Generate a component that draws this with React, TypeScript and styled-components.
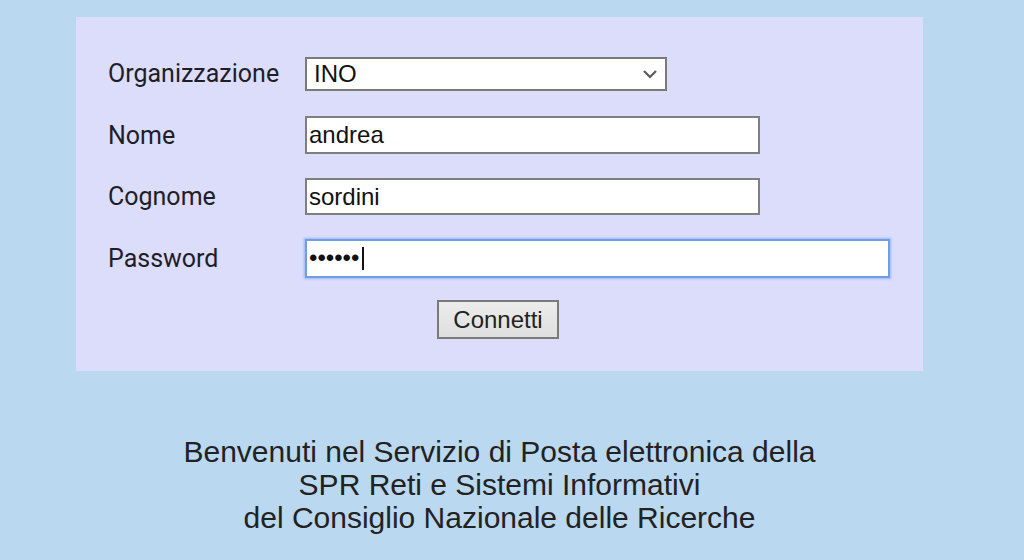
import React from "react";
import styled, { createGlobalStyle } from "styled-components";

const GlobalStyle = createGlobalStyle`
  html, body {
    margin: 0;
    padding: 0;
    background: #bad8ef;
  }
  * { box-sizing: border-box; }
`;

const Page = styled.div`
  width: 1024px;
  height: 560px;
  padding: 17px 101px 0 76px;
  background: #bad8ef;
  overflow: hidden;
`;

const Panel = styled.form`
  height: 354px;
  background: #dcdcfb;
  padding: 26px 32px 20px;
  display: grid;
  grid-template-columns: 197px 1fr;
  grid-auto-rows: 61.5px;
  align-items: center;
  margin: 0;
`;

const Label = styled.label`
  font-family: Roboto, "Liberation Sans", sans-serif;
  font-size: 25px;
  color: #1e1e28;
  line-height: 1;
`;

const SelectBox = styled.div`
  position: relative;
  width: 362px;
  height: 34px;
`;

const Select = styled.select`
  appearance: none;
  -webkit-appearance: none;
  width: 100%;
  height: 100%;
  border: 2px solid #7a7a7a;
  border-radius: 0;
  background: #fff;
  padding: 0 0 0 7px;
  font-family: "Liberation Sans", Arial, sans-serif;
  font-size: 24px;
  color: #111;
  outline: none;
`;

const Chevron = styled.svg`
  position: absolute;
  right: 9px;
  top: 11px;
  width: 16px;
  height: 12px;
  pointer-events: none;
`;

const FieldBox = styled.div`
  position: relative;
  display: inline-block;
`;

const TextInput = styled.input<{ $w: number; $h: number; $focus?: boolean }>`
  display: block;
  width: ${(p) => p.$w}px;
  height: ${(p) => p.$h}px;
  border: 2px solid ${(p) => (p.$focus ? "#6f9ee6" : "#7f7f7f")};
  box-shadow: ${(p) => (p.$focus ? "0 0 2px 1px rgba(110,160,235,0.6)" : "none")};
  border-radius: 0;
  background: #fff;
  padding: 0 2px;
  font-family: "Liberation Sans", Arial, sans-serif;
  font-size: 24px;
  color: #111;
  outline: none;
  caret-color: ${(p) => (p.$focus ? "transparent" : "#111")};
`;

const Caret = styled.span`
  position: absolute;
  left: 57px;
  top: 8px;
  width: 2px;
  height: 23px;
  background: #111;
  pointer-events: none;
`;

const ButtonCell = styled.div`
  grid-column: 1 / span 2;
  display: flex;
  justify-content: center;
`;

const Button = styled.button`
  width: 122px;
  height: 39px;
  border: 2px solid #7a7a7a;
  border-radius: 0;
  background: linear-gradient(#ececec, #dfdfdf);
  font-family: "Liberation Sans", Arial, sans-serif;
  font-size: 24px;
  color: #222;
  padding: 0;
  margin-left: -3px;
`;

const Welcome = styled.p`
  margin: 64px 0 0;
  text-align: center;
  font-family: "Liberation Sans", Arial, sans-serif;
  font-size: 30px;
  line-height: 33px;
  color: #222;
`;

export default function App() {
  return (
    <>
      <GlobalStyle />
      <Page>
        <Panel onSubmit={(e) => e.preventDefault()}>
          <Label htmlFor="org">Organizzazione</Label>
          <SelectBox>
            <Select id="org" defaultValue="INO">
              <option value="INO">INO</option>
            </Select>
            <Chevron viewBox="0 0 16 12">
              <path d="M2 3 L8 9 L14 3" fill="none" stroke="#5a5a5a" strokeWidth="2.2" />
            </Chevron>
          </SelectBox>

          <Label htmlFor="nome">Nome</Label>
          <TextInput id="nome" $w={455} $h={38} defaultValue="andrea" />

          <Label htmlFor="cognome">Cognome</Label>
          <TextInput id="cognome" $w={455} $h={37} defaultValue="sordini" />

          <Label htmlFor="pw">Password</Label>
          <FieldBox>
            <TextInput id="pw" type="password" $w={585} $h={39} $focus autoFocus defaultValue="123456" />
            <Caret />
          </FieldBox>

          <ButtonCell>
            <Button type="submit">Connetti</Button>
          </ButtonCell>
        </Panel>
        <Welcome>
          Benvenuti nel Servizio di Posta elettronica della
          <br />
          SPR Reti e Sistemi Informativi
          <br />
          del Consiglio Nazionale delle Ricerche
        </Welcome>
      </Page>
    </>
  );
}
